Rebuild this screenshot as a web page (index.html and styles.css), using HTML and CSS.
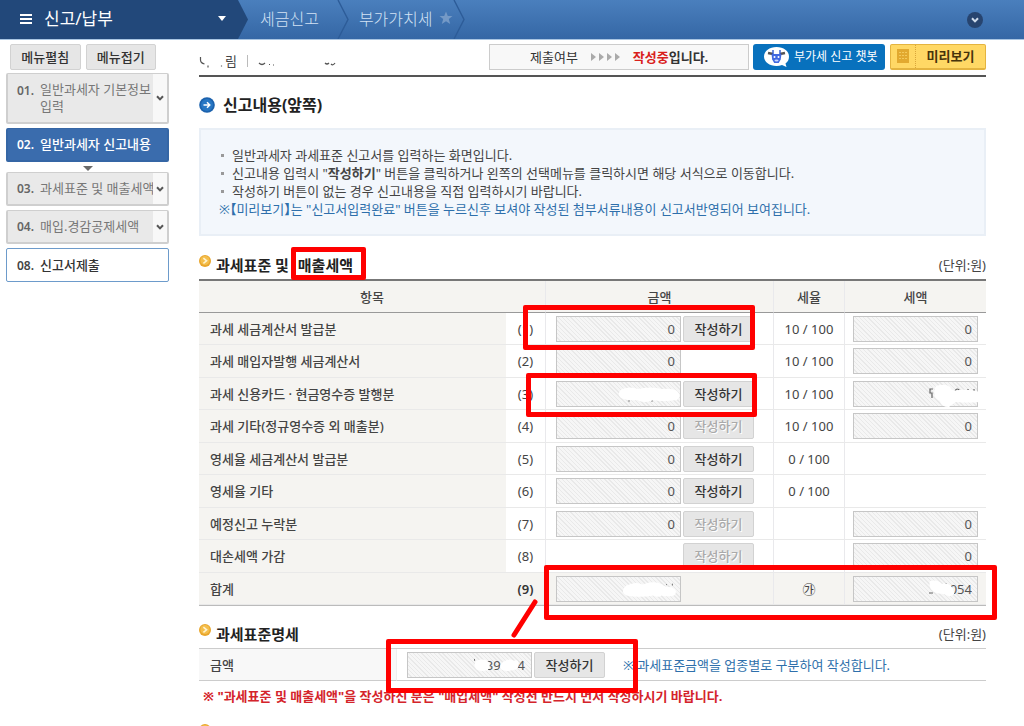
FILE: index.html
```html
<!DOCTYPE html>
<html lang="ko">
<head>
<meta charset="utf-8">
<title>신고내용(앞쪽)</title>
<link rel="stylesheet" href="styles.css">
</head>
<body>
<svg class="defs" width="0" height="0" aria-hidden="true">
  <symbol id="chev" viewBox="0 0 8 6"><path d="M1 1.2 4 4.4 7 1.2" fill="none" stroke="currentColor" stroke-width="2"/></symbol>
  <symbol id="coin" viewBox="0 0 12 12"><circle cx="6" cy="6" r="6" fill="#e9a62c"/><circle cx="6" cy="5.5" r="4.6" fill="#f4be4c"/><path d="M4.4 3.2 7.6 5.8 4.4 8.4" fill="none" stroke="#fff3cf" stroke-width="1.6"/></symbol>
  <symbol id="sep" viewBox="0 0 12 39" preserveAspectRatio="none"><path d="M1 0 11 19.5 1 39" fill="none" stroke="#2d5c98" stroke-width="1.4"/></symbol>
</svg>
<header class="topbar">
  <button class="brand" type="button">
    <svg width="12" height="12" viewBox="0 0 12 12"><path d="M0 2h12M0 6h12M0 10h12" stroke="#fff" stroke-width="2"/></svg>
    <span>신고/납부</span>
    <svg class="caret" width="8" height="5" viewBox="0 0 8 5"><path d="M0 0h8L4 5z" fill="#fff"/></svg>
  </button>
  <nav class="crumbs">
    <a href="#">세금신고</a>
    <svg class="sep"><use href="#sep"/></svg>
    <a href="#">부가가치세</a>
    <svg class="star" width="14" height="14" viewBox="0 0 14 14"><path d="M7 .5 8.8 5H13.5L9.8 8l1.4 5L7 10.2 2.8 13l1.4-5L.5 5h4.700z" fill="#7499c6"/></svg>
    <svg class="sep"><use href="#sep"/></svg>
  </nav>
  <button class="round" type="button" aria-label="펼치기"><svg width="8" height="6"><use href="#chev"/></svg></button>
</header>
<div class="page">
  <aside class="side">
    <div class="pair"><button class="btn" type="button">메뉴펼침</button><button class="btn" type="button">메뉴접기</button></div>
    <nav class="steps">
      <a class="step tall" href="#"><b>01.</b><span class="name">일반과세자 기본정보<br>입력</span><span class="drop"><svg width="8" height="6"><use href="#chev"/></svg></span></a>
      <a class="step on" href="#"><b>02.</b><span class="name">일반과세자 신고내용</span></a>
      <svg class="down" width="10" height="5" viewBox="0 0 10 5"><path d="M0 0h10L5 5z" fill="#6b6b6b"/></svg>
      <a class="step" href="#"><b>03.</b><span class="name one">과세표준 및 매출세액</span><span class="drop"><svg width="8" height="6"><use href="#chev"/></svg></span></a>
      <a class="step" href="#"><b>04.</b><span class="name one">매입.경감공제세액</span><span class="drop"><svg width="8" height="6"><use href="#chev"/></svg></span></a>
      <a class="step last" href="#"><b>08.</b><span class="name">신고서제출</span></a>
    </nav>
  </aside>
  <main class="main">
    <div class="head">
      <div class="who">
        <svg width="26" height="14" viewBox="0 0 26 14"><path d="M1.500 3v3q0 3 4 4M9 11.500v2M22.500 11.500v1" fill="none" stroke="#555" stroke-width="1.2"/></svg>
        <span>림</span><i class="bar"></i>
        <svg width="80" height="14" viewBox="0 0 80 14"><path d="M1 9q3 3 6 0M11 10.500h1M15 11h1M67 9q2 2 4 0M73 10q2 2 4-1" fill="none" stroke="#555" stroke-width="1.2"/></svg>
      </div>
      <div class="state"><span>제출여부</span><svg width="29" height="8" viewBox="0 0 29 8"><path d="M0 0 5 4 0 8zM8 0l5 4-5 4zM16 0l5 4-5 4zM24 0l5 4-5 4z" fill="#aaa"/></svg><b><em>작성중</em>입니다.</b></div>
      <button class="bot" type="button">
        <svg width="25" height="20" viewBox="0 0 25 20"><path d="M12.500 0C19.500 0 25 4 25 9.500c0 3-1 5-3.500 7l1 3.500-4.500-2c-1.600.7-3.500 1-5.500 1C5.500 19 0 15 0 9.500S5.500 0 12.500 0z" fill="#fff"/><path d="M4 6 9 7M21 6l-5 1" stroke="#555" stroke-width="2.600"/><path d="M9 3v4M16 3v4" stroke="#315bd0" stroke-width="1.400"/><path d="M7.500 7h10l-.8 5.500-2 3.500h-4.500l-2-3.500z" fill="#4169e1"/><circle cx="10.500" cy="10" r="1" fill="#fff"/><circle cx="14.500" cy="10" r="1" fill="#fff"/><ellipse cx="12.500" cy="13.500" rx="2" ry="1" fill="#c7d6ff"/></svg>
        <span>부가세 신고 챗봇</span>
      </button>
      <button class="preview" type="button"><span class="pic"><svg width="12" height="14" viewBox="0 0 12 14"><path d="M0 0h12v14H0z" fill="#e2a92f"/><path d="M2 3.500h8M2 6.500h8M2 9.500h8" stroke="#f3c95c" stroke-dasharray="2 1"/></svg></span><span class="txt">미리보기</span></button>
    </div>

    <h1><svg width="16" height="16" viewBox="0 0 16 16"><circle cx="8" cy="8" r="7.800" fill="#1c62ad"/><circle cx="8" cy="8" r="6" fill="#2877c4"/><path d="M4.500 8h6M8 5.200 10.800 8 8 10.800" fill="none" stroke="#fff" stroke-width="1.500"/></svg>신고내용(앞쪽)</h1>

    <div class="info">
      <ul>
        <li>일반과세자 과세표준 신고서를 입력하는 화면입니다.</li>
        <li>신고내용 입력시 "<b>작성하기</b>" 버튼을 클릭하거나 왼쪽의 선택메뉴를 클릭하시면 해당 서식으로 이동합니다.</li>
        <li>작성하기 버튼이 없는 경우 신고내용을 직접 입력하시기 바랍니다.</li>
      </ul>
      <p>※<b>【</b>미리보기<b>】</b>는 "신고서입력완료" 버튼을 누르신후 보셔야 작성된 첨부서류내용이 신고서반영되어 보여집니다.</p>
    </div>

    <div class="sect">
      <h2><svg width="12" height="12"><use href="#coin"/></svg>과세표준 및 <span class="hot">매출세액<i class="mark m-word"></i></span></h2>
      <span class="unit">(단위:원)</span>
    </div>
    <table class="grid">
      <colgroup><col><col class="c-no"><col class="c-amt"><col class="c-rate"><col class="c-tax"></colgroup>
      <thead><tr><th colspan="2">항목</th><th>금액</th><th>세율</th><th>세액</th></tr></thead>
      <tbody>
        <tr><th>과세 세금계산서 발급분</th><td class="no">(1)</td><td><div class="pairbox"><input aria-label="(1) 금액" value="0" readonly><button class="btn" type="button">작성하기</button></div><i class="mark m-one"></i></td><td class="rate">10 / 100</td><td><input aria-label="(1) 세액" value="0" readonly></td></tr>
        <tr><th>과세 매입자발행 세금계산서</th><td class="no">(2)</td><td><div class="pairbox"><input aria-label="(2) 금액" value="0" readonly></div></td><td class="rate">10 / 100</td><td><input aria-label="(2) 세액" value="0" readonly></td></tr>
        <tr><th>과세 신용카드 · 현금영수증 발행분</th><td class="no">(3)</td><td><div class="pairbox"><input aria-label="(3) 금액" readonly><svg class="blot b-amt" viewBox="0 0 62 16"><path d="M11 13v2M34 13v2" stroke="#888"/><path d="M4 2q8-3 16 0 12-3 24 0 10-1 15 2 5 5 0 9-16 2-24 0-8 4-16 0-10 1-16-2-5-5 1-9z" fill="#fff"/></svg><button class="btn" type="button">작성하기</button></div><i class="mark m-three"></i></td><td class="rate">10 / 100</td><td><div class="solo"><input aria-label="(3) 세액" readonly><svg class="blot b-tax" viewBox="0 0 52 22"><path d="M5 4H2v4h2v5M27 6q2-4 5 0M40 4v2M46 4v2" fill="none" stroke="#666" stroke-width="1.200"/><path d="M8 1q9-3 14 1 2 5 9 3 11-1 21 2v10q-12 1-24 0-4 2-7 5-8 0-9-6-9-4-4-15z" fill="#fff"/></svg></div></td></tr>
        <tr><th>과세 기타(정규영수증 외 매출분)</th><td class="no">(4)</td><td><div class="pairbox"><input aria-label="(4) 금액" value="0" readonly><button class="btn" type="button" disabled>작성하기</button></div></td><td class="rate">10 / 100</td><td><input aria-label="(4) 세액" value="0" readonly></td></tr>
        <tr><th>영세율 세금계산서 발급분</th><td class="no">(5)</td><td><div class="pairbox"><input aria-label="(5) 금액" value="0" readonly><button class="btn" type="button">작성하기</button></div></td><td class="rate">0 / 100</td><td></td></tr>
        <tr><th>영세율 기타</th><td class="no">(6)</td><td><div class="pairbox"><input aria-label="(6) 금액" value="0" readonly><button class="btn" type="button">작성하기</button></div></td><td class="rate">0 / 100</td><td></td></tr>
        <tr><th>예정신고 누락분</th><td class="no">(7)</td><td><div class="pairbox"><input aria-label="(7) 금액" value="0" readonly><button class="btn" type="button" disabled>작성하기</button></div></td><td></td><td><input aria-label="(7) 세액" value="0" readonly></td></tr>
        <tr><th>대손세액 가감</th><td class="no">(8)</td><td><div class="pairbox end"><button class="btn" type="button" disabled>작성하기</button></div></td><td></td><td><input aria-label="(8) 세액" value="0" readonly></td></tr>
        <tr class="sum"><th>합계</th><td class="no">(9)</td><td><div class="pairbox"><input aria-label="합계 금액" readonly><svg class="blot b-amt" viewBox="0 0 62 20"><path d="M50 4h1M57 3v2" stroke="#666"/><path d="M6 5q10-5 18-1 12-5 22 0 2 3 10 3 8 4 3 9-8 2-14 0-4 3-9 0-16 3-30 0-8-4 0-11z" fill="#fff"/></svg></div><i class="mark m-sum"></i><svg class="link" width="30" height="42" viewBox="0 0 30 42"><path d="M26 4 5 37" stroke="#f00" stroke-width="5" stroke-linecap="round"/></svg></td><td class="rate">㉮</td><td><div class="solo"><input aria-label="합계 세액" value="054" readonly><svg class="blot b-sumtax" viewBox="0 0 28 18"><path d="M1 13h4M18 3v3" stroke="#666"/><path d="M2 1q8-2 12 3 4-2 9 2 4 4 3 8-4 4-10 0-6 0-10-2-6-4-4-11z" fill="#fff"/></svg></div></td></tr>
      </tbody>
    </table>

    <div class="sect second">
      <h2><svg width="12" height="12"><use href="#coin"/></svg>과세표준명세</h2>
      <span class="unit">(단위:원)</span>
    </div>
    <table class="grid detail">
      <colgroup><col class="c-label"><col></colgroup>
      <tbody><tr><th>금액</th><td><div class="pairbox wide"><input aria-label="과세표준 금액" value="39     4" readonly><svg class="blot b-det" viewBox="0 0 50 16"><path d="M1 1v2" stroke="#666"/><path d="M3 3q8-3 13 1 3 5-1 9-8 2-12-1-4-4 0-9zM32 4q6-4 11-1 5-2 5 4 0 6-7 6-7 2-12-1-2-5 3-8z" fill="#fff"/></svg><button class="btn" type="button">작성하기</button><span class="tip">※ 과세표준금액을 업종별로 구분하여 작성합니다.</span></div><i class="mark m-det"></i></td></tr></tbody>
    </table>
    <p class="warn">※ "과세표준 및 매출세액"을 작성하신 분은 "매입세액" 작성전 반드시 먼저 작성하시기 바랍니다.</p>
    <svg class="more" width="12" height="12"><use href="#coin"/></svg>
  </main>
</div>
</body>
</html>
```

FILE: styles.css
```css
* { box-sizing: border-box; }
body {
  margin: 0;
  height: 100vh;
  overflow: hidden;
  background: #fff;
  color: #444;
  font: 13px/18px "Noto Sans", "Noto Sans CJK KR", sans-serif;
}
a { color: inherit; text-decoration: none; }
button, input { font: inherit; color: inherit; margin: 0; }
h1, h2, p, ul { margin: 0; padding: 0; }
svg { display: block; flex: none; }
.defs { position: absolute; }

/* top bar */
.topbar {
  display: flex;
  align-items: center;
  height: 40px;
  padding-right: 41px;
  border-bottom: 1px solid #a9c5e2;
  background: linear-gradient(#4a7fbd, #3567a5);
}
.brand {
  display: flex;
  align-items: center;
  gap: 12px;
  width: 248px;
  height: 39px;
  padding: 0 22px 2px 20px;
  border: 0;
  background: #22487a;
  clip-path: polygon(0 0, 238px 0, 100% 50%, 238px 100%, 0 100%);
  color: #fff;
  font-size: 17px;
}
.caret { margin-left: auto; }
.crumbs { display: flex; align-items: center; flex: 1; padding-left: 12px; color: #d3e2f4; font-size: 16px; font-weight: 300; }
.crumbs a { padding-bottom: 2px; }
.sep { width: 12px; height: 39px; margin: 0 10px 0 18px; }
.star { margin-left: 6px; margin-bottom: 3px; }
.star + .sep { margin-left: 0; }
.round {
  display: grid;
  place-items: center;
  width: 16px;
  height: 16px;
  padding: 0;
  border: 0;
  border-radius: 50%;
  background: #27446f;
  color: #cfdcec;
}

/* page columns */
.page { display: flex; gap: 30px; padding: 4px 38px 0 6px; }
.side { flex: none; width: 163px; }
.main { flex: 1; min-width: 0; }

.btn {
  width: 71px;
  height: 26px;
  padding: 0;
  border: 1px solid #d2d2d2;
  border-radius: 2px;
  background: #e6e6e6;
  color: #333;
  font-weight: 500;
  line-height: 22px;
  white-space: nowrap;
}
.btn:disabled { color: #aaa; text-shadow: 1px 1px #fff; }
.pair { display: flex; gap: 5px; padding: 0 13px 0 4px; }
.pair .btn { flex: 1; }

/* step menu */
.steps { display: flex; flex-direction: column; gap: 4px; padding-top: 3px; }
.step {
  display: flex;
  align-items: center;
  gap: 4px;
  height: 34px;
  padding-left: 9px;
  overflow: hidden;
  border: 2px solid #cfcfcf;
  border-width: 1px 2px 2px;
  border-radius: 2px;
  background: #e9e9e9;
  color: #777;
  line-height: 17px;
}
.step b { flex: none; width: 19px; color: #666; font-size: 12px; font-weight: 600; }
.name { flex: 1; min-width: 0; white-space: nowrap; }
.one { overflow: hidden; }
.drop { display: grid; place-items: center; align-self: stretch; flex: none; width: 14px; margin-left: -4px; background: #f8f8f8; color: #555; }
.tall { height: 51px; }
.tall b { align-self: flex-start; padding-top: 8px; }
.on { border-color: #3566a5; background: #3a6cad; color: #fff; font-weight: 500; }
.step.on b { color: #fff; }
.down { align-self: center; margin-bottom: -3px; }
.last { padding-left: 10px; border: 1px solid #6d9bcb; background: #fff; color: #333; font-weight: 500; }
.step.last b { color: #444; }

/* status row */
.head { display: flex; align-items: center; height: 33px; padding-bottom: 6px; border-bottom: 2px solid #555; }
.who { display: flex; align-items: center; flex: 1; padding-top: 8px; }
.bar { width: 1px; height: 12px; margin: 0 10px; background: #bbb; }
.state {
  display: flex;
  align-items: center;
  gap: 13px;
  width: 260px;
  height: 26px;
  padding-left: 40px;
  border: 1px solid #ccc;
  background: #f8f8f8;
  color: #333;
}
.state em { color: #d9201c; font-style: normal; }
.state b, .info b, .warn { font-weight: 700; }
.bot {
  display: flex;
  align-items: center;
  gap: 5px;
  width: 132px;
  height: 26px;
  margin: 0 5px 0 4px;
  padding: 0 0 0 11px;
  border: 0;
  border-radius: 3px;
  background: #0871bd;
  color: #fff;
  font-size: 12px;
  white-space: nowrap;
}
.preview {
  display: flex;
  width: 96px;
  height: 26px;
  padding: 0;
  border: 1px solid #e4b440;
  border-bottom-width: 2px;
  border-radius: 2px;
  background: #ffd865;
  color: #46330c;
  font-weight: 700;
}
.pic { display: grid; place-items: center; width: 25px; height: 100%; border-right: 1px dotted #d9a63a; }
.txt { flex: 1; line-height: 22px; }

h1, h2 { display: flex; align-items: center; color: #222; font-size: 16px; font-weight: 700; line-height: 24px; }
h1 { gap: 8px; padding: 16px 0 11px; }
h2 { font-size: 15px; }

.info { padding: 16px 18px; border: 2px solid #e9eff6; background: #f3f7fc; white-space: nowrap; color: #444; }
.info ul { list-style: none; }
.info li { display: flex; align-items: center; white-space: pre; }
.info li::before { content: ""; width: 3px; height: 3px; margin: 0 8px 0 2px; background: #999; }
.info p { color: #2e6fab; font-feature-settings: "halt"; }

/* section titles */
.sect { display: flex; align-items: flex-end; justify-content: space-between; height: 43px; padding-bottom: 2px; }
.sect h2 { gap: 5px; white-space: pre; }
.sect h2 svg { align-self: flex-start; margin-top: 2px; }
.unit { padding-bottom: 3px; }
.hot { position: relative; }
.second { height: 42px; }

/* tables */
.grid { width: 100%; border-collapse: separate; border-spacing: 0; table-layout: fixed; border-top: 2px solid #777; border-bottom: 1px solid #bbb; }
.c-no { width: 39px; }
.c-amt { width: 228px; }
.c-rate { width: 71px; }
.c-tax { width: 142px; }
.c-label { width: 198px; }
.grid th, .grid td { padding: 0; border-bottom: 1px solid #e9e9e9; }
.grid th { background: #f5f4f1; font-weight: 500; }
.grid thead th { height: 32px; border-bottom: 1px solid #999; }
.grid thead th + th, .grid td + td { border-left: 1px solid #e9e9ec; }
.grid tbody tr { position: relative; height: 32px; }
.grid tbody tr:nth-child(even) { height: 33px; }
.grid tbody th { padding-left: 11px; text-align: left; }
.grid .no { text-align: center; }
.grid .rate { text-align: center; }
.grid td:last-child { padding-left: 8px; }
.sum td { background: #f5f4f1; }
.sum .no { color: #333; font-weight: 600; }
input {
  display: block;
  width: 125px;
  height: 26px;
  padding: 0 5px 0 4px;
  border: 1px solid #c6c6c6;
  background: repeating-linear-gradient(45deg, #f6f6f6 0 2px, #e9e9e9 2px 3px);
  color: #555;
  text-align: right;
}
.pairbox { position: relative; display: flex; align-items: center; gap: 2px; width: 198px; margin-left: 10px; }
.end { justify-content: flex-end; }
.solo { position: relative; width: 125px; }
.blot { position: absolute; }
.b-amt { left: 62px; top: 5px; width: 62px; height: 18px; }
.b-tax { left: 75px; top: 4px; width: 52px; height: 22px; }
.b-sumtax { left: 75px; top: 4px; width: 28px; height: 18px; }

.grid.detail { border-top: 1px solid #ccc; border-bottom: 0; }
.detail th, .detail td { border-color: #ccc; }
.grid.detail tbody th { background: #f8f8f8; border-right: 1px solid #eee; }
.wide { width: auto; margin-left: 2px; }
.wide input { padding-right: 6px; }
.b-det { left: 65px; top: 6px; width: 50px; height: 15px; }
.tip { padding-left: 16px; color: #2e6fab; white-space: nowrap; }
.warn { padding: 6px 0 0 4px; color: #d4242b; white-space: nowrap; }
.more { margin-top: 19px; }

/* hand-drawn highlights lie over the form */
.mark { position: absolute; z-index: 2; border: 5px solid #f00; border-radius: 2px; pointer-events: none; }
.m-word { left: -7px; right: -13px; top: -6px; height: 33px; }
.m-one { right: 231px; top: -8px; width: 232px; height: 45px; }
.m-three { right: 229px; top: -5px; width: 231px; height: 44px; }
.m-sum { right: -11px; top: -8px; width: 453px; height: 55px; }
.link { position: absolute; z-index: 2; right: 447px; top: 25px; }
.m-det { left: 187px; top: -10px; width: 252px; height: 54px; }
```
